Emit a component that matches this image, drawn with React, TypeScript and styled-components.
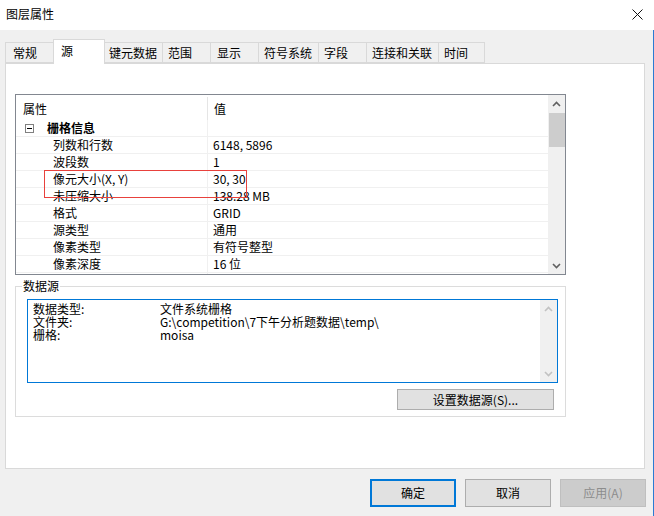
import React from "react";
import styled, { createGlobalStyle } from "styled-components";

const GlobalStyle = createGlobalStyle`
  html, body { margin: 0; padding: 0; }
  body {
    width: 654px;
    height: 516px;
    overflow: hidden;
    background: #f0f0f0;
    font-family: "Noto Sans CJK SC", "Liberation Sans", sans-serif;
    font-size: 12px;
    color: #000;
  }
  * { box-sizing: border-box; }
`;

const Dialog = styled.div`
  width: 654px;
  height: 516px;
  display: flex;
  flex-direction: column;
  background: #f0f0f0;
`;

const TitleBar = styled.div`
  height: 30px;
  flex: none;
  background: #fff;
  display: flex;
  align-items: center;
  justify-content: space-between;
  padding: 0 11px 2px 6px;
`;

const TitleText = styled.span`
  font-size: 12px;
  line-height: 14px;
`;

const CloseIcon = styled.svg`
  width: 11px;
  height: 11px;
  display: block;
`;

const Body = styled.div`
  flex: 1;
  display: flex;
  flex-direction: column;
  padding: 0 7px 0 5px;
  border-right: 1px solid #2b7bd3;
`;

const TabStrip = styled.div`
  height: 33px;
  display: flex;
  align-items: flex-end;
`;

const Tab = styled.div<{ $w: number; $active?: boolean; $pl: number }>`
  width: ${(p) => p.$w}px;
  height: ${(p) => (p.$active ? 25 : 21)}px;
  margin-right: -1px;
  margin-bottom: ${(p) => (p.$active ? -1 : 0)}px;
  border: 1px solid #d9d9d9;
  border-bottom: ${(p) => (p.$active ? "none" : "1px solid #d9d9d9")};
  background: ${(p) => (p.$active ? "#fff" : "#f0f0f0")};
  position: relative;
  z-index: ${(p) => (p.$active ? 2 : 1)};
  padding-left: ${(p) => p.$pl}px;
  padding-top: ${(p) => (p.$active ? 3 : 2)}px;
  line-height: 16px;
  font-size: 12px;
  white-space: nowrap;
`;

const Panel = styled.div`
  width: 640px;
  height: 406px;
  border: 1px solid #d9d9d9;
  background: #fff;
  padding: 30px 0 0 9px;
  display: flex;
  flex-direction: column;
`;

const PropList = styled.div`
  width: 551px;
  height: 181px;
  border: 1px solid #828790;
  position: relative;
  display: flex;
  overflow: hidden;
  flex: none;
`;

const Grid = styled.div`
  flex: 1;
  display: flex;
  flex-direction: column;
  overflow: hidden;
`;

const HeaderRow = styled.div`
  height: 25px;
  flex: none;
  display: flex;
`;

const HeaderCell = styled.div<{ $first?: boolean }>`
  width: ${(p) => (p.$first ? "192px" : "auto")};
  flex: ${(p) => (p.$first ? "none" : "1")};
  border-right: ${(p) => (p.$first ? "1px solid #e5e5e5" : "none")};
  margin-top: 2px;
  padding-left: ${(p) => (p.$first ? 7 : 6)}px;
  padding-top: 4px;
  font-size: 12px;
  line-height: 16px;
`;

const Row = styled.div`
  height: 17px;
  flex: none;
  display: flex;
  border-bottom: 1px solid #f0f0f0;
`;

const NameCell = styled.div<{ $group?: boolean }>`
  width: 192px;
  flex: none;
  border-right: 1px solid #f0f0f0;
  display: flex;
  align-items: center;
  padding-left: ${(p) => (p.$group ? 9 : 37)}px;
  font-size: 12px;
  line-height: 16px;
  font-weight: ${(p) => (p.$group ? 700 : 400)};
  white-space: nowrap;
`;

const ValueCell = styled.div`
  flex: 1;
  display: flex;
  align-items: center;
  padding-left: 5px;
  font-size: 12px;
  line-height: 16px;
  white-space: nowrap;
`;

const ToggleBox = styled.span`
  width: 9px;
  height: 9px;
  border: 1px solid #808080;
  display: inline-flex;
  align-items: center;
  justify-content: center;
  margin-right: 13px;
  &::after {
    content: "";
    width: 5px;
    height: 1px;
    background: #000;
  }
`;

const ScrollBar = styled.div<{ $disabled?: boolean }>`
  width: 17px;
  flex: none;
  background: #f0f0f0;
  display: flex;
  flex-direction: column;
  align-items: stretch;
`;

const ArrowBtn = styled.div`
  height: 17px;
  flex: none;
  display: flex;
  align-items: center;
  justify-content: center;
`;

const Track = styled.div`
  flex: 1;
  padding-left: 1px;
`;

const Thumb = styled.div`
  height: 34px;
  margin-top: 1px;
  background: #cdcdcd;
`;

const Highlight = styled.div`
  position: absolute;
  left: 28px;
  top: 75px;
  width: 203px;
  height: 28px;
  border: 1px solid #e8413c;
  pointer-events: none;
`;

const GroupBox = styled.div`
  margin-top: 11px;
  width: 551px;
  height: 131px;
  border: 1px solid #dcdcdc;
  position: relative;
  padding: 12px 0 0 11px;
  display: flex;
  flex-direction: column;
  flex: none;
`;

const GroupLabel = styled.span`
  position: absolute;
  left: 6px;
  top: -8px;
  padding: 0 1px;
  background: #fff;
  font-size: 12px;
  line-height: 14px;
`;

const TextBox = styled.div`
  width: 531px;
  height: 84px;
  border: 1px solid #0078d7;
  background: #fff;
  display: flex;
`;

const TextContent = styled.div`
  flex: 1;
  padding: 2px 0 0 5px;
  display: flex;
  flex-direction: column;
`;

const InfoLine = styled.div`
  display: flex;
  height: 13px;
  line-height: 13px;
  font-size: 12px;
  white-space: nowrap;
`;

const InfoLabel = styled.span`
  width: 127px;
  flex: none;
`;

const ButtonRow = styled.div`
  display: flex;
  justify-content: flex-end;
  padding-right: 11px;
  margin-top: 6px;
`;

const SmallButton = styled.div`
  width: 157px;
  height: 21px;
  border: 1px solid #adadad;
  background: #e1e1e1;
  display: flex;
  align-items: center;
  justify-content: center;
  font-size: 12px;
  line-height: 14px;
`;

const Footer = styled.div`
  display: flex;
  justify-content: flex-end;
  gap: 9px;
  margin-top: 10px;
`;

const DlgButton = styled.div<{ $variant?: "default" | "disabled" }>`
  width: 86px;
  height: 28px;
  display: flex;
  align-items: center;
  justify-content: center;
  font-size: 12px;
  line-height: 14px;
  background: ${(p) => (p.$variant === "disabled" ? "#cccccc" : "#e1e1e1")};
  color: ${(p) => (p.$variant === "disabled" ? "#8c8c8c" : "#000")};
  border: ${(p) =>
    p.$variant === "default"
      ? "2px solid #0078d7"
      : p.$variant === "disabled"
      ? "1px solid #bfbfbf"
      : "1px solid #adadad"};
`;

const Chevron = ({ up, color }: { up?: boolean; color: string }) => (
  <svg width="9" height="6" viewBox="0 0 9 6" style={{ display: "block" }}>
    <path
      d={up ? "M1 5 L4.5 1.5 L8 5" : "M1 1 L4.5 4.5 L8 1"}
      fill="none"
      stroke={color}
      strokeWidth="1.6"
    />
  </svg>
);

const tabs = [
  { label: "常规", w: 49, pl: 7 },
  { label: "源", w: 52, pl: 7, active: true },
  { label: "键元数据", w: 59, pl: 4 },
  { label: "范围", w: 49, pl: 5 },
  { label: "显示", w: 49, pl: 6 },
  { label: "符号系统", w: 61, pl: 5 },
  { label: "字段", w: 49, pl: 5 },
  { label: "连接和关联", w: 73, pl: 5 },
  { label: "时间", w: 47, pl: 5 },
];

const rows: [string, string][] = [
  ["列数和行数", "6148, 5896"],
  ["波段数", "1"],
  ["像元大小(X, Y)", "30, 30"],
  ["未压缩大小", "138.28 MB"],
  ["格式", "GRID"],
  ["源类型", "通用"],
  ["像素类型", "有符号整型"],
  ["像素深度", "16 位"],
  ["NoData 值", "-32768"],
];

const info: [string, string][] = [
  ["数据类型:", "文件系统栅格"],
  ["文件夹:", "G:\\competition\\7下午分析题数据\\temp\\"],
  ["栅格:", "moisa"],
];

export default function App() {
  return (
    <>
      <GlobalStyle />
      <Dialog>
        <TitleBar>
          <TitleText>图层属性</TitleText>
          <CloseIcon viewBox="0 0 11 11">
            <path d="M0.5 0.5 L10.5 10.5 M10.5 0.5 L0.5 10.5" stroke="#111" strokeWidth="1" fill="none" />
          </CloseIcon>
        </TitleBar>
        <Body>
          <TabStrip>
            {tabs.map((t) => (
              <Tab key={t.label} $w={t.w} $pl={t.pl} $active={t.active}>
                {t.label}
              </Tab>
            ))}
          </TabStrip>
          <Panel>
            <PropList>
              <Grid>
                <HeaderRow>
                  <HeaderCell $first>属性</HeaderCell>
                  <HeaderCell>值</HeaderCell>
                </HeaderRow>
                <Row>
                  <NameCell $group>
                    <ToggleBox />
                    栅格信息
                  </NameCell>
                  <ValueCell />
                </Row>
                {rows.map(([k, v]) => (
                  <Row key={k}>
                    <NameCell>{k}</NameCell>
                    <ValueCell>{v}</ValueCell>
                  </Row>
                ))}
              </Grid>
              <ScrollBar>
                <ArrowBtn>
                  <Chevron up color="#606060" />
                </ArrowBtn>
                <Track>
                  <Thumb />
                </Track>
                <ArrowBtn>
                  <Chevron color="#606060" />
                </ArrowBtn>
              </ScrollBar>
              <Highlight />
            </PropList>
            <GroupBox>
              <GroupLabel>数据源</GroupLabel>
              <TextBox>
                <TextContent>
                  {info.map(([k, v]) => (
                    <InfoLine key={k}>
                      <InfoLabel>{k}</InfoLabel>
                      <span>{v}</span>
                    </InfoLine>
                  ))}
                </TextContent>
                <ScrollBar>
                  <ArrowBtn>
                    <Chevron up color="#c2c2c2" />
                  </ArrowBtn>
                  <Track />
                  <ArrowBtn>
                    <Chevron color="#c2c2c2" />
                  </ArrowBtn>
                </ScrollBar>
              </TextBox>
              <ButtonRow>
                <SmallButton>设置数据源(S)...</SmallButton>
              </ButtonRow>
            </GroupBox>
          </Panel>
          <Footer>
            <DlgButton $variant="default">确定</DlgButton>
            <DlgButton>取消</DlgButton>
            <DlgButton $variant="disabled">应用(A)</DlgButton>
          </Footer>
        </Body>
      </Dialog>
    </>
  );
}
